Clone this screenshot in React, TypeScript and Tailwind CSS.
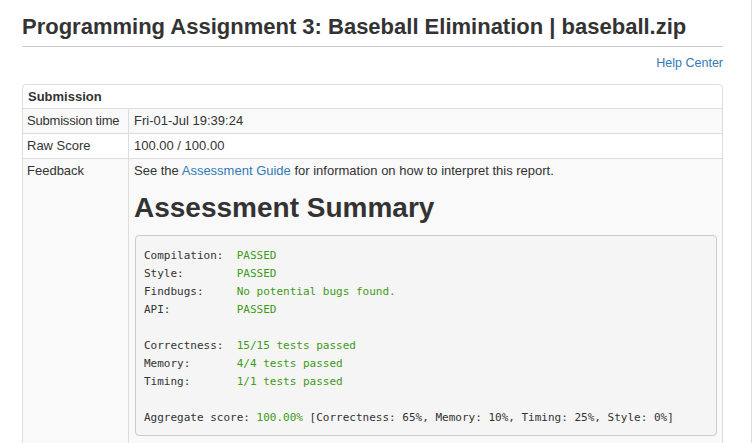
import React from 'react';

const sans = { fontFamily: '"Liberation Sans", Arial, Helvetica, sans-serif' };

// one line of the assessment <pre>: label is padded in the string itself
const Line: React.FC<{ label: string; value?: string; rest?: string }> = ({ label, value, rest }) => (
    <div className="h-[18px] leading-[18px]">
        {label}
        {value && <span className="text-[#3d9b16]">{value}</span>}
        {rest}
    </div>
);

export default function App() {
    return (
        <div className="min-h-screen bg-white flex text-[#333]" style={sans}>
            <div className="w-[752px] shrink-0 border-r border-[#dcdcdc] min-h-screen">
                <div className="ml-[22px] w-[701px] pt-[14px]">
                    <h1 className="text-[22px] leading-[26px] font-bold pb-[6px] border-b border-[#ccc]">
                        Programming Assignment 3: Baseball Elimination | baseball.zip
                    </h1>

                    <div className="mt-[8px] text-right text-[12.5px] leading-[17px]">
                        <a href="#" className="text-[#337ab7]">Help Center</a>
                    </div>

                    <div className="mt-[12px] w-[701px] border border-[#ddd] rounded-t-[4px] text-[13px]">
                        <div className="h-[23px] flex items-center px-[5px] font-bold">Submission</div>

                        <div className="grid grid-cols-[106px_1fr] border-t border-[#ddd] bg-[#f9f9f9]">
                            <div className="h-[24px] flex items-center px-[4px] border-r border-[#ddd] tracking-[-0.2px]">Submission time</div>
                            <div className="h-[24px] flex items-center px-[5px]">Fri-01-Jul 19:39:24</div>
                        </div>

                        <div className="grid grid-cols-[106px_1fr] border-t border-[#ddd] bg-white">
                            <div className="h-[24px] flex items-center px-[4px] border-r border-[#ddd]">Raw Score</div>
                            <div className="h-[24px] flex items-center px-[5px]">100.00 / 100.00</div>
                        </div>

                        <div className="grid grid-cols-[106px_1fr] border-t border-[#ddd] bg-[#f9f9f9]">
                            <div className="px-[4px] pt-[3px] leading-[17px] border-r border-[#ddd]">Feedback</div>
                            <div className="px-[5px] pt-[3px] pb-[20px]">
                                <p className="leading-[17px]">
                                    See the <a href="#" className="text-[#337ab7]">Assessment Guide</a> for information on how to interpret this report.
                                </p>
                                <h2 className="mt-[13px] text-[28px] leading-[32px] font-bold">Assessment Summary</h2>
                                <pre
                                    className="mt-[11px] ml-[1px] bg-[#f5f5f5] border border-[#ccc] rounded-[4px] pl-[8px] pr-[8px] pt-[11px] pb-[8px] text-[11px] text-[#333] whitespace-pre"
                                    style={{ fontFamily: '"DejaVu Sans Mono", "Liberation Mono", monospace' }}
                                >
                                    <Line label="Compilation:  " value="PASSED" />
                                    <Line label="Style:        " value="PASSED" />
                                    <Line label="Findbugs:     " value="No potential bugs found." />
                                    <Line label="API:          " value="PASSED" />
                                    <Line label=" " />
                                    <Line label="Correctness:  " value="15/15 tests passed" />
                                    <Line label="Memory:       " value="4/4 tests passed" />
                                    <Line label="Timing:       " value="1/1 tests passed" />
                                    <Line label=" " />
                                    <Line
                                        label="Aggregate score: "
                                        value="100.00%"
                                        rest=" [Correctness: 65%, Memory: 10%, Timing: 25%, Style: 0%]"
                                    />
                                </pre>
                            </div>
                        </div>
                    </div>
                </div>
            </div>
        </div>
    );
}
